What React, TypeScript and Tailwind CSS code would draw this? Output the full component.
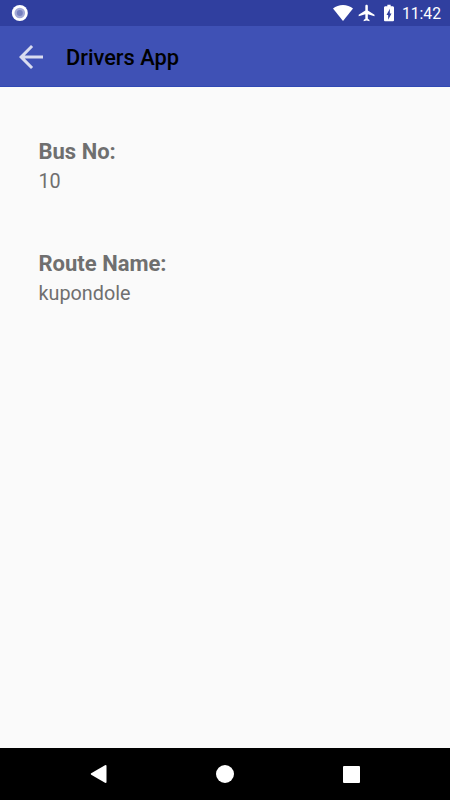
interface IField {
  label: string;
  value: string;
}

const fields: IField[] = [
  { label: "Bus No:", value: "10" },
  { label: "Route Name:", value: "kupondole" },
];

function StatusBar() {
  return (
    <div className="flex h-[26px] items-center bg-[#303f9f] pl-[11px] pr-[9px] text-white">
      <svg width="18" height="18" viewBox="0 0 18 18">
        <circle cx="8.800" cy="9" r="8" fill="white" />
        <circle cx="8.800" cy="9" r="5.300" fill="#a3a9d6" />
        <circle cx="8.800" cy="9" r="3" fill="#7680bf" />
      </svg>
      <div className="ml-auto flex items-center">
        <svg width="20" height="16" viewBox="0 0 20 16" fill="currentColor">
          <path d="M10 16 0 3.500C2.800 1.200 6.200 0 10 0s7.200 1.200 10 3.500z" />
        </svg>
        <svg className="ml-[4px]" width="20" height="20" viewBox="0 0 24 24" fill="currentColor">
          <path d="M21 16v-2l-8-5V3.500c0-.830-.670-1.500-1.500-1.500S10 2.670 10 3.500V9l-8 5v2l8-2.500V19l-2 1.500V22l3.500-1 3.500 1v-1.500L13 19v-5.500l8 2.500z" />
        </svg>
        <svg className="ml-[2px]" width="20" height="20" viewBox="0 0 24 24" fill="currentColor">
          <path d="M15.670 4H14V2h-4v2H8.330C7.100 4 6 4.600 6 5.330v15.330C6 21.400 6.800 22 7.530 22h8.930c.740 0 1.540-.600 1.540-1.330V5.330C18 4.600 16.900 4 15.670 4zM11 20v-5.500H9L13 7v5.500h2L11 20z" />
        </svg>
        <span className="ml-[3px] mt-[2px] text-[15.700px] leading-none">11:42</span>
      </div>
    </div>
  );
}

function Header() {
  return (
    <header className="flex h-[61px] items-center border-b border-[#3049b4] bg-[#3f51b5] pl-[13px]">
      <svg className="mt-[2px]" width="36" height="36" viewBox="0 0 24 24" fill="#d9dcf0">
        <path d="M20 11H7.830l5.590-5.590L12 4l-8 8 8 8 1.410-1.410L7.830 13H20v-2z" />
      </svg>
      <h1 className="ml-[17px] mt-[3px] text-[21.800px] leading-none font-medium text-black">Drivers App</h1>
    </header>
  );
}

function NavBar() {
  return (
    <nav className="flex h-[52px] items-center justify-between bg-black px-[90px]">
      <svg width="17" height="18" viewBox="0 0 17 18" fill="white">
        <path d="M15 .200Q16.500-.300 16.500 1v16q0 1.300-1.500.800L1.200 9.700q-.900-.700 0-1.400z" />
      </svg>
      <div className="size-[18px] rounded-full bg-white" />
      <div className="size-[17px] rounded-[1px] bg-white" />
    </nav>
  );
}

export default function App() {
  return (
    <div className="flex h-screen flex-col overflow-hidden bg-[#fafafa] font-['Roboto',sans-serif]">
      <StatusBar />
      <Header />
      <main className="flex flex-1 flex-col gap-[52px] px-[38.500px] pt-[50px]">
        {fields.map((field) => (
          <div key={field.label} className="text-[#6f6f6f]">
            <p className="text-[22px] leading-[30px] font-bold">{field.label}</p>
            <p className="text-[19.800px] leading-[30px]">{field.value}</p>
          </div>
        ))}
      </main>
      <NavBar />
    </div>
  );
}
